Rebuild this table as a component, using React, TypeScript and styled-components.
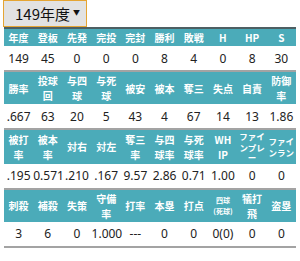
import React from 'react'
import styled, { createGlobalStyle } from 'styled-components'

const GlobalStyle = createGlobalStyle`
  html, body {
    margin: 0;
    padding: 0;
    background: #ffffff;
    font-family: "Noto Sans", "Noto Sans CJK JP", sans-serif;
  }
`

const Page = styled.div`
  width: 300px;
  padding: 0 4px 0 4px;
  box-sizing: border-box;
`

const YearSelect = styled.div`
  width: 84px;
  height: 27px;
  margin-left: -1px;
  box-sizing: border-box;
  border: 1.5px solid #e5a533;
  background: #e2e2e2;
  display: flex;
  align-items: center;
  justify-content: space-between;
  padding: 0 6px 0 11px;
  font-size: 15px;
  color: #111;
  font-family: "Noto Sans CJK JP", sans-serif;
`

const Arrow = styled.span`
  font-size: 7px;
  color: #111;
  margin-top: -4px;
`

const Block = styled.table`
  width: 100%;
  border-collapse: collapse;
  table-layout: fixed;
`

const HeadRow = styled.tr<{ $first?: boolean }>`
  background: #4babb9;
  border-top: ${({ $first }) => ($first ? '2px solid #4d5f63' : 'none')};
`

const HeadCell = styled.th<{ $size?: number; $line?: number; $pad?: number }>`
  color: #ffffff;
  font-weight: 700;
  font-size: ${({ $size }) => $size ?? 10}px;
  line-height: ${({ $line }) => $line ?? 15}px;
  padding: 1px ${({ $pad }) => $pad ?? 1}px;
  text-align: center;
  word-break: break-all;
  line-break: anywhere;
  font-family: "Noto Sans CJK JP", sans-serif;
`

const DataRow = styled.tr`
  border-bottom: 2px solid #a3a3a3;
`

const DataCell = styled.td`
  height: 24px;
  padding: 0;
  text-align: center;
  font-size: 12px;
  color: #222;
  white-space: nowrap;
`

type Head = { label: string; size?: number; line?: number; pad?: number }

const blocks: { heads: Head[]; values: string[] }[] = [
  {
    heads: ['年度', '登板', '先発', '完投', '完封', '勝利', '敗戦', 'H', 'HP', 'S'].map(label => ({ label })),
    values: ['149', '45', '0', '0', '0', '8', '4', '0', '8', '30'],
  },
  {
    heads: ['勝率', '投球回', '与四球', '与死球', '被安', '被本', '奪三', '失点', '自責', '防御率'].map(label => ({ label })),
    values: ['.667', '63', '20', '5', '43', '4', '67', '14', '13', '1.86'],
  },
  {
    heads: [
      { label: '被打率' },
      { label: '被本率' },
      { label: '対右' },
      { label: '対左' },
      { label: '奪三率' },
      { label: '与四球率' },
      { label: '与死球率' },
      { label: 'WHIP', pad: 5 },
      { label: 'ファインプレー', size: 8.5, line: 10.5 },
      { label: 'ファインラン', size: 8.5, line: 10.5 },
    ],
    values: ['.195', '0.571', '.210', '.167', '9.57', '2.86', '0.71', '1.00', '0', '0'],
  },
  {
    heads: [
      { label: '刺殺' },
      { label: '補殺' },
      { label: '失策' },
      { label: '守備率' },
      { label: '打率' },
      { label: '本塁' },
      { label: '打点' },
      { label: '四球(死球)', size: 7, line: 11 },
      { label: '犠打飛' },
      { label: '盗塁' },
    ],
    values: ['3', '6', '0', '1.000', '---', '0', '0', '0(0)', '0', '0'],
  },
]

const App: React.FC = () => {
  return (
    <>
      <GlobalStyle />
      <Page>
        <YearSelect>
          <span>149年度</span>
          <Arrow>▼</Arrow>
        </YearSelect>
        {blocks.map((block, i) => (
          <Block key={i}>
            <tbody>
              <HeadRow $first={i === 0}>
                {block.heads.map(h => (
                  <HeadCell key={h.label} $size={h.size} $line={h.line} $pad={h.pad}>
                    {h.label === '四球(死球)' ? (
                      <>
                        四球
                        <br />
                        (死球)
                      </>
                    ) : (
                      h.label
                    )}
                  </HeadCell>
                ))}
              </HeadRow>
              <DataRow>
                {block.values.map((v, j) => (
                  <DataCell key={j}>{v}</DataCell>
                ))}
              </DataRow>
            </tbody>
          </Block>
        ))}
      </Page>
    </>
  )
}

export default App
